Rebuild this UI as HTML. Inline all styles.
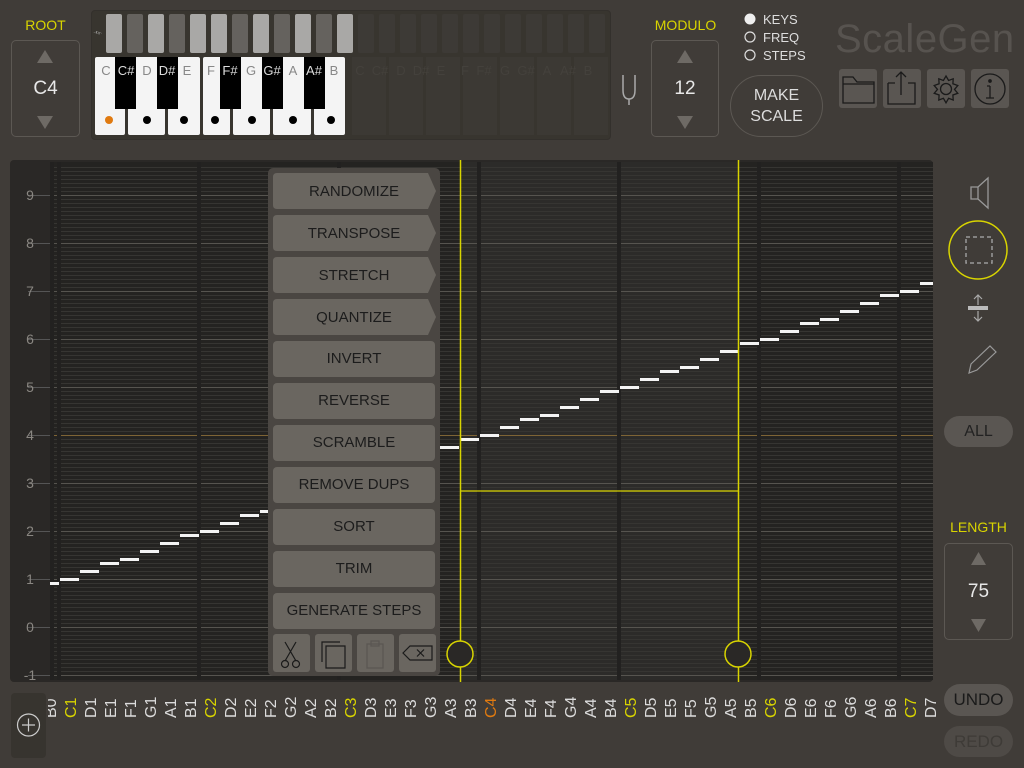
<!DOCTYPE html>
<html><head><meta charset="utf-8"><style>
*{margin:0;padding:0;box-sizing:border-box}
body{width:1024px;height:768px;overflow:hidden;background:#403c38;font-family:"Liberation Sans",sans-serif;position:relative}
.abs{position:absolute}
.lbl{color:#d8d400;font-size:14px;text-align:center}
.box{border:1.5px solid #5c5853;border-radius:5px}
.btn{position:absolute;left:273px;width:162px;height:36px;background:#6a6660;border-radius:4px;color:#1c1c1c;font-size:15px;text-align:center;line-height:36px}
.pill{position:absolute;left:944px;width:69px;background:#5a5652;border-radius:16px;text-align:center;font-size:16px}
.ib{position:absolute;top:69px;width:38px;height:39px;background:#5a5652;border-radius:3px}
</style></head><body>

<!-- ROOT -->
<div class="abs lbl" style="left:11px;top:17px;width:69px">ROOT</div>
<div class="abs box" style="left:11px;top:40px;width:69px;height:97px"></div>
<svg class="abs" style="left:0;top:0" width="1024" height="160">
<polygon points="45,50 37,63 53,63" fill="#6e6a65"/>
<polygon points="45,129 37,116 53,116" fill="#6e6a65"/>
<polygon points="685,50 677,63 693,63" fill="#6e6a65"/>
<polygon points="685,129 677,116 693,116" fill="#6e6a65"/>
<path d="M623,75 V90 Q623,99 629,99 Q635,99 635,90 V75 M629,99 V105" stroke="#aaa" stroke-width="1.5" fill="none"/>
<circle cx="750" cy="19" r="5.5" fill="#eee"/>
<circle cx="750" cy="37" r="5" fill="none" stroke="#ddd" stroke-width="1.2"/>
<circle cx="750" cy="55" r="5" fill="none" stroke="#ddd" stroke-width="1.2"/>
</svg>
<div class="abs" style="left:11px;top:78px;width:69px;text-align:center;color:#e8e8e8;font-size:19px">C4</div>

<!-- keyboard panel -->
<div class="abs" style="left:91px;top:10px;width:520px;height:130px;background:#38352f;border-radius:4px;border:1px solid #33302c"></div>
<svg class="abs" style="left:0;top:0" width="620" height="145" id="kb"></svg>

<!-- MODULO -->
<div class="abs lbl" style="left:651px;top:17px;width:69px">MODULO</div>
<div class="abs box" style="left:651px;top:40px;width:68px;height:97px"></div>
<div class="abs" style="left:651px;top:78px;width:68px;text-align:center;color:#e8e8e8;font-size:19px">12</div>
<div class="abs" style="left:763px;top:11px;color:#ddd;font-size:13px;line-height:18px">KEYS<br>FREQ<br>STEPS</div>
<div class="abs" style="left:730px;top:75px;width:93px;height:62px;border:1.5px solid #5c5853;border-radius:31px;color:#ddd;font-size:16px;text-align:center;line-height:21px;padding-top:9px">MAKE<br>SCALE</div>
<div class="abs" style="left:835px;top:17px;color:#57534f;font-size:40px;letter-spacing:0.5px">ScaleGen</div>
<div class="ib" style="left:839px"></div><div class="ib" style="left:883px"></div><div class="ib" style="left:927px"></div><div class="ib" style="left:971px"></div>
<svg class="abs" style="left:830px;top:60px" width="190" height="55">
<g stroke="#1a1a1a" stroke-width="1.3" fill="none" transform="translate(-830,-60)">
<path d="M843,103 V77 H853 L857,82 H874 V103 Z M843,84 H874"/>
<path d="M888,83 H895 M908,83 H915 V104 H888 V83 M901,95 V72 M896,77 L901,72 L906,77"/>
<circle cx="946" cy="89" r="5.5"/>
<path d="M946,76 l2.6,4.5 4.6,-1.7 -0.3,5 4.9,1.7 -3.3,3.9 3.3,3.9 -4.9,1.7 0.3,5 -4.6,-1.7 -2.6,4.5 -2.6,-4.5 -4.6,1.7 0.3,-5 -4.9,-1.7 3.3,-3.9 -3.3,-3.9 4.9,-1.7 -0.3,-5 4.6,1.7 z"/>
<circle cx="990" cy="89" r="15"/>
<path d="M990,86 V98 M986,98 H994 M987,86 H990"/><circle cx="990" cy="81" r="1.2" fill="#1a1a1a"/>
</g></svg>

<!-- graph -->
<svg class="abs" style="left:0;top:155px" width="1024" height="613" id="g"></svg>

<!-- menu -->
<div class="abs" style="left:268px;top:168px;width:172px;height:508px;background:#4a4642;border-radius:5px"></div>
<div id="menu"></div>
<svg class="abs" style="left:268px;top:630px" width="172" height="46">
<rect x="5" y="4" width="37" height="38" rx="3" fill="#6a6660"/>
<rect x="47" y="4" width="37" height="38" rx="3" fill="#6a6660"/>
<rect x="89" y="4" width="37" height="38" rx="3" fill="#6a6660"/>
<rect x="131" y="4" width="37" height="38" rx="3" fill="#6a6660"/>
<g stroke="#1a1a1a" stroke-width="1.2" fill="none">
<path d="M17,12 L28,31 M28,12 L17,31"/><circle cx="17" cy="34" r="3.5"/><circle cx="28" cy="34" r="3.5"/>
<path d="M54,32 V12 H72 M58,16 H77 V38 H58 Z"/>
<path d="M135,23 L142,16 H164 V30 H142 Z"/>
<path d="M149,19.5 L156,26.5 M156,19.5 L149,26.5"/>
</g>
<g stroke="#5a5652" stroke-width="1.2" fill="none"><path d="M99,14 H115 V38 H99 Z M103,11 H111 V16 H103 Z"/></g>
</svg>

<!-- plus -->
<div class="abs" style="left:11px;top:693px;width:35px;height:65px;background:#37342f;border-radius:4px"></div>
<svg class="abs" style="left:11px;top:693px" width="35" height="65"><circle cx="17.5" cy="32" r="11" stroke="#ccc" stroke-width="1.2" fill="none"/><path d="M11,32 H24 M17.5,25.5 V38.5" stroke="#ccc" stroke-width="1.2"/></svg>

<!-- right side -->
<svg class="abs" style="left:933px;top:160px" width="91" height="300">
<path d="M38,27 H45 L55,18 V48 L45,39 H38 Z M45,27 V39" stroke="#999" stroke-width="1.3" fill="none"/>
<circle cx="45" cy="90" r="29" stroke="#d8d400" stroke-width="1.5" fill="none"/>
<rect x="33" y="77" width="26" height="26" stroke="#999" stroke-width="1.5" fill="none" stroke-dasharray="4,3"/>
<path d="M45,135 V145 M41,139 L45,135 L49,139 M45,151 V161 M41,157 L45,161 L49,157" stroke="#aaa" stroke-width="1.2" fill="none"/>
<rect x="35" y="146" width="20" height="4" fill="#bbb"/>
<path d="M36,213 L38,204 L57,186 L63,192 L44,210 Z" stroke="#999" stroke-width="1.2" fill="none"/>
</svg>
<div class="pill" style="top:416px;height:31px;line-height:31px;color:#222">ALL</div>
<div class="abs lbl" style="left:944px;top:519px;width:69px">LENGTH</div>
<div class="abs box" style="left:944px;top:543px;width:69px;height:97px"></div>
<svg class="abs" style="left:944px;top:543px" width="69" height="97"><polygon points="34.5,9 27,22 42,22" fill="#6e6a65"/><polygon points="34.5,89 27,76 42,76" fill="#6e6a65"/></svg>
<div class="abs" style="left:944px;top:581px;width:69px;text-align:center;color:#e8e8e8;font-size:19px">75</div>
<div class="pill" style="top:684px;height:32px;line-height:32px;color:#1a1a1a;font-size:17px">UNDO</div>
<div class="pill" style="top:726px;height:31px;line-height:31px;color:#3e3b37;background:#4e4a46;font-size:17px">REDO</div>

<script>
var kb=document.getElementById('kb'),h='';
for(var i=0;i<24;i++){var x=106+i*21;var nat=[1,0,1,0,1,1,0,1,0,1,0,1][i%12];
 var c=i<12?(nat?'#a9a8a6':'#65625e'):'#3d3a36';h+='<rect x="'+x+'" y="14" width="16" height="39" rx="2" fill="'+c+'"/>';}
h+='<text x="98" y="38" fill="#aaa" font-size="11" transform="rotate(-70 98 35)">♮</text>';
for(var i=0;i<7;i++){h+='<rect x="'+(352+i*37)+'" y="57" width="34" height="78" fill="#3c3934"/>';}
var wk=[[95,125],[128,165],[168,200],[203,230],[233,270],[273,311],[314,345]];
var dots=[109,147,184,215,252,293,331];
wk.forEach(function(w,j){h+='<rect x="'+w[0]+'" y="57" width="'+(w[1]-w[0])+'" height="78" rx="2" fill="#f4f4f4"/>';
 h+='<circle cx="'+dots[j]+'" cy="120" r="4" fill="'+(j==0?'#e07a10':'#000')+'"/>';});
var bk=[115,157,220,262,304];bk.forEach(function(x){h+='<rect x="'+x+'" y="57" width="21" height="52" fill="#000"/>';});
var ln=[['C',106,'#888'],['C#',126,'#ddd'],['D',147,'#888'],['D#',167,'#ddd'],['E',187,'#888'],['F',211,'#888'],['F#',230,'#ddd'],['G',251,'#888'],['G#',272,'#ddd'],['A',293,'#888'],['A#',314,'#ddd'],['B',334,'#888']];
ln.forEach(function(l){h+='<text x="'+l[1]+'" y="75" fill="'+l[2]+'" font-size="13" text-anchor="middle">'+l[0]+'</text>';});
ln.forEach(function(l){h+='<text x="'+(l[1]+254)+'" y="75" fill="#44413c" font-size="13" text-anchor="middle">'+l[0]+'</text>';});
kb.innerHTML=h;

var items=['RANDOMIZE','TRANSPOSE','STRETCH','QUANTIZE','INVERT','REVERSE','SCRAMBLE','REMOVE DUPS','SORT','TRIM','GENERATE STEPS'];
var m='';items.forEach(function(t,i){var y=173+42*i;
 if(i<4){m+='<svg class="abs" style="left:273px;top:'+y+'px" width="164" height="36"><path d="M4,0 H155 L163,18 L155,36 H4 Q0,36 0,32 V4 Q0,0 4,0Z" fill="#6a6660"/><text x="81" y="23" text-anchor="middle" font-size="15" fill="#1c1c1c" font-family="Liberation Sans">'+t+'</text></svg>';}
 else m+='<div class="btn" style="top:'+y+'px">'+t+'</div>';});
document.getElementById('menu').innerHTML=m;

var g=document.getElementById('g'),s='',T=155;
function Y(y){return y-T;}
s+='<rect x="10" y="'+Y(160)+'" width="923" height="522" rx="4" fill="#2a2826"/>';
s+='<rect x="50" y="'+Y(162)+'" width="883" height="518" fill="#242321"/>';
s+='<rect x="460" y="'+Y(162)+'" width="278" height="518" fill="#2c2b29"/>';
for(var y=167;y<=678;y+=4){var major=((y-195)%48==0);
 var col=major?'#56544f':'#363532';
 if(y==435)col='#7e6435';
 s+='<line x1="50" x2="933" y1="'+Y(y)+'.5" y2="'+Y(y)+'.5" stroke="'+col+'" stroke-width="1"/>';
 if(major) s+='<line x1="28" x2="50" y1="'+Y(y)+'.5" y2="'+Y(y)+'.5" stroke="#555" stroke-width="1"/>';}
for(var k=0;k<7;k++){var x=60+140*k;s+='<rect x="'+(x-3)+'" y="'+Y(162)+'" width="4" height="518" fill="#222120"/>';}
s+='<rect x="50" y="'+Y(162)+'" width="4" height="518" fill="#222120"/>';
for(var v=9;v>=-1;v--){var y=195+(9-v)*48;s+='<text x="30" y="'+(Y(y)+5)+'" fill="#8a8782" font-size="14" text-anchor="middle">'+v+'</text>';}
var sc=[0,2,4,5,7,9,11];
for(var d=-1;d<44;d++){var x=40+20*(d+1);var o=Math.floor(d/7),r=((d%7)+7)%7;var y=579-4*(12*o+sc[r]);
 var x1=Math.max(x,50),x2=Math.min(x+19,933);if(x2>x1) s+='<rect x="'+x1+'" y="'+(Y(y)-1)+'" width="'+(x2-x1)+'" height="3" fill="#f4f4f4"/>';}
s+='<line x1="460.5" x2="460.5" y1="'+Y(160)+'" y2="'+Y(682)+'" stroke="#d8d400" stroke-width="1.5"/>';
s+='<line x1="738.5" x2="738.5" y1="'+Y(160)+'" y2="'+Y(682)+'" stroke="#d8d400" stroke-width="1.5"/>';
s+='<line x1="460" x2="738" y1="'+Y(491)+'" y2="'+Y(491)+'" stroke="#d8d400" stroke-width="1.2"/>';
s+='<circle cx="460" cy="'+Y(654)+'" r="13" fill="#2a2826" stroke="#d8d400" stroke-width="1.5"/>';
s+='<circle cx="738" cy="'+Y(654)+'" r="13" fill="#2a2826" stroke="#d8d400" stroke-width="1.5"/>';
var nm=['C','D','E','F','G','A','B'];
s+='<clipPath id="cl"><rect x="48" y="'+Y(686)+'" width="888" height="40"/></clipPath><g clip-path="url(#cl)">';
for(var d=-1;d<44;d++){var cx=70+20*d;var o=Math.floor(d/7)+1,r=((d%7)+7)%7;var t=nm[r]+o;
 var c=r==0?(o==4?'#e07a10':'#d8d400'):'#dcdcdc';
 s+='<text transform="translate('+(cx+6)+','+Y(718)+') rotate(-90)" fill="'+c+'" font-size="16">'+t+'</text>';}
s+='</g>';
g.innerHTML=s;
</script>
</body></html>
